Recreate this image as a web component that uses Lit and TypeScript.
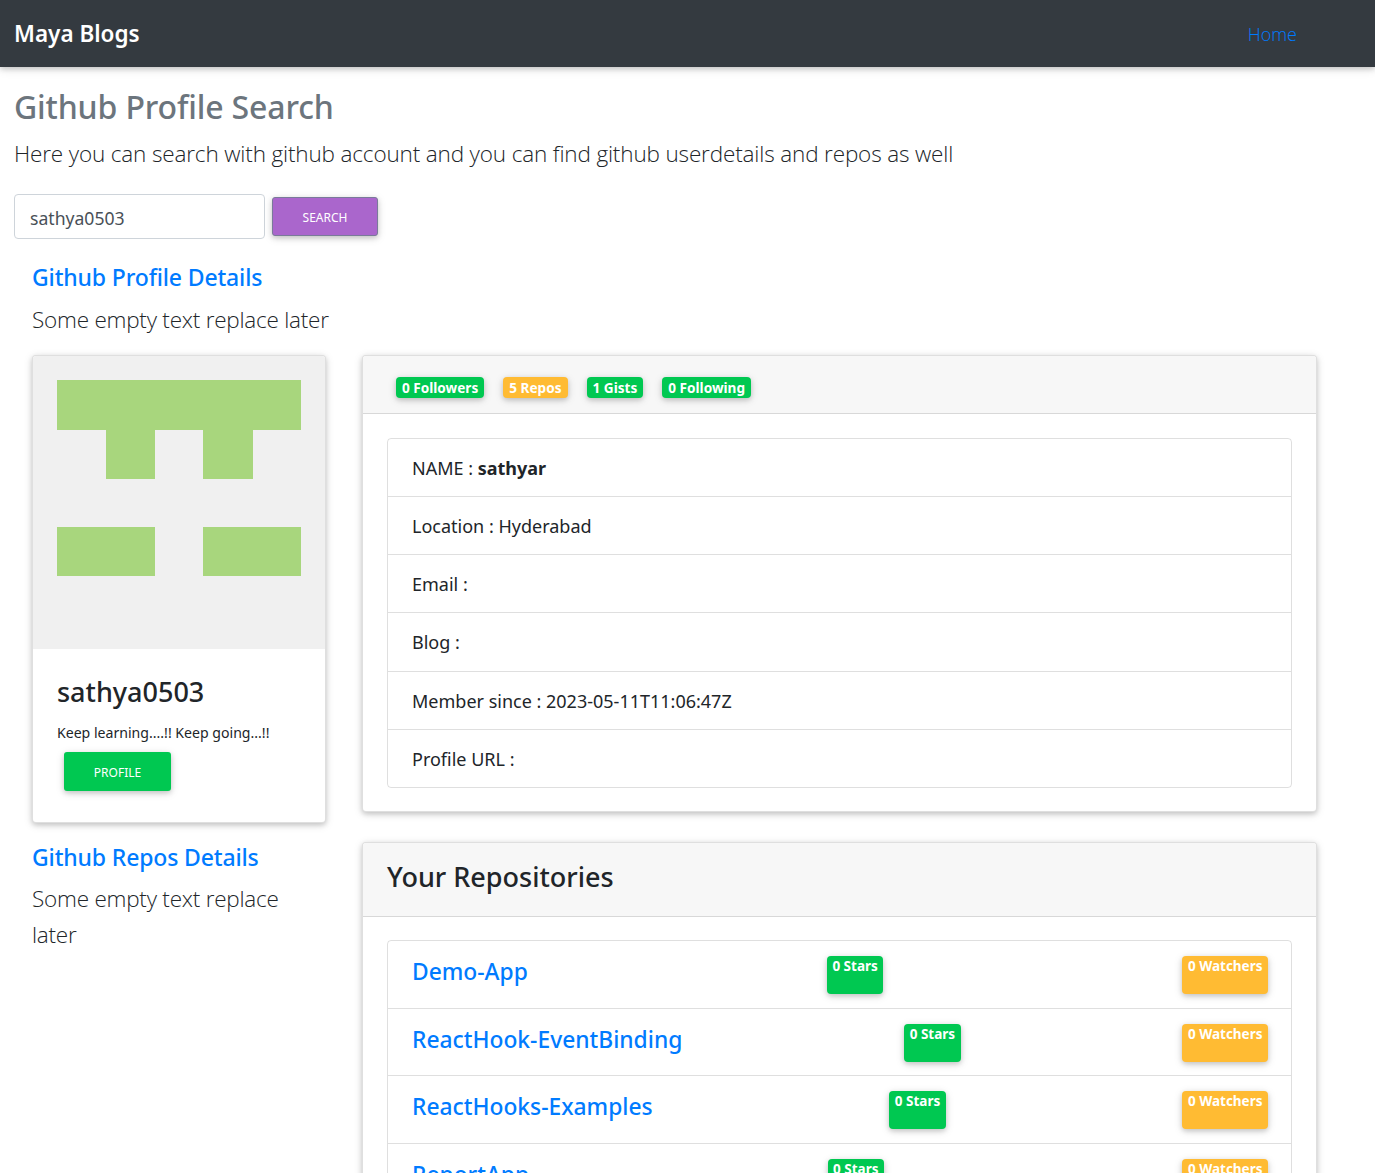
import { html, css, LitElement, svg } from 'lit';
import { customElement } from 'lit/decorators.js';

const repos = [
  { name: 'Demo-App', stars: 0, watchers: 0 },
  { name: 'ReactHook-EventBinding', stars: 0, watchers: 0 },
  { name: 'ReactHooks-Examples', stars: 0, watchers: 0 },
  { name: 'ReportApp', stars: 0, watchers: 0 },
];

const details = ['Location : Hyderabad', 'Email :', 'Blog :', 'Member since : 2023-05-11T11:06:47Z', 'Profile URL :'];

// x, y, w, h inside the 292x293 avatar
const identicon = [
  [24, 24, 244, 50],
  [73, 74, 49, 49],
  [170, 74, 50, 49],
  [24, 171, 98, 49],
  [170, 171, 98, 49],
];

@customElement('app-root')
export class AppRoot extends LitElement {
  render() {
    return html`
      <nav class="navbar">
        <a class="brand">Maya Blogs</a>
        <a class="nav-link">Home</a>
      </nav>
      <main class="page">
        <h2 class="page-title">Github Profile Search</h2>
        <p class="lead intro">Here you can search with github account and you can find github userdetails and repos as well</p>
        <form class="search">
          <input class="search-input" .value=${'sathya0503'} />
          <button type="button" class="btn btn-purple">Search</button>
        </form>
        <div class="content">
          <h4 class="section-title">Github Profile Details</h4>
          <p class="lead section-lead">Some empty text replace later</p>
          <div class="columns">
            <div class="side">
              <div class="card">
                <svg class="avatar" viewBox="0 0 292 293">
                  <rect width="292" height="293" fill="#f0f0f0"></rect>
                  ${identicon.map(
                    ([x, y, w, h]) => svg`<rect x=${x} y=${y} width=${w} height=${h} fill="#a8d67d"></rect>`
                  )}
                </svg>
                <div class="card-body">
                  <h4 class="card-title">sathya0503</h4>
                  <p class="bio">Keep learning....!! Keep going...!!</p>
                  <button type="button" class="btn btn-green">Profile</button>
                </div>
              </div>
              <h4 class="section-title repos-title">Github Repos Details</h4>
              <p class="lead repos-lead">Some empty text replace later</p>
            </div>
            <div class="main-col">
              <div class="card">
                <div class="card-header badges">
                  <span class="badge green">0 Followers</span>
                  <span class="badge orange">5 Repos</span>
                  <span class="badge green">1 Gists</span>
                  <span class="badge green">0 Following</span>
                </div>
                <div class="card-body wide">
                  <ul class="list">
                    <li class="item">NAME : <strong>sathyar</strong></li>
                    ${details.map(d => html`<li class="item">${d}</li>`)}
                  </ul>
                </div>
              </div>
              <div class="card repos-card">
                <div class="card-header repos-header">Your Repositories</div>
                <div class="card-body wide repos-body">
                  <ul class="list">
                    ${repos.map(
                      r => html`
                        <li class="item repo">
                          <a class="repo-name">${r.name}</a>
                          <span class="badge tall green">${r.stars} Stars</span>
                          <span class="badge tall orange">${r.watchers} Watchers</span>
                        </li>
                      `
                    )}
                  </ul>
                </div>
              </div>
            </div>
          </div>
        </div>
      </main>
    `;
  }

  static styles = css`
    :host {
      display: block;
      height: 100vh;
      overflow: hidden;
      font-family: 'Noto Sans', 'Open Sans', sans-serif;
      color: #212529;
      background: #fff;
    }

    * {
      box-sizing: border-box;
    }

    .navbar {
      display: flex;
      align-items: center;
      justify-content: space-between;
      height: 67px;
      padding: 0 78px 0 14px;
      background: #343a40;
      box-shadow: 0 2px 5px rgba(0, 0, 0, 0.16), 0 2px 10px rgba(0, 0, 0, 0.12);
      position: relative;
    }

    .brand {
      color: #fff;
      font-size: 22.5px;
      font-weight: 600;
      padding-bottom: 1px;
    }

    .nav-link {
      color: #007bff;
      font-family: 'Open Sans', sans-serif;
      font-size: 18px;
      font-weight: 300;
    }

    .page {
      padding: 0 14px;
    }

    .page-title {
      margin: 0;
      padding-top: 17px;
      font-size: 32px;
      line-height: 45px;
      letter-spacing: -0.15px;
      font-weight: 500;
      color: #6c757d;
    }

    .lead {
      margin: 0;
      font-family: 'Open Sans', sans-serif;
      font-size: 22.5px;
      font-weight: 300;
      line-height: 36px;
      letter-spacing: -0.23px;
    }

    .intro {
      margin-top: 7px;
      letter-spacing: -0.15px;
    }

    .search {
      display: flex;
      align-items: center;
      gap: 7px;
      margin-top: 22px;
    }

    .search-input {
      width: 251px;
      height: 45px;
      padding: 2px 15px 0;
      border: 1px solid #ced4da;
      border-radius: 4px;
      font: inherit;
      font-size: 17.6px;
      color: #495057;
      outline: none;
    }

    .btn {
      border: 0;
      border-radius: 3px;
      padding: 2px 0 0;
      color: #fff;
      font-family: inherit;
      font-size: 12px;
      text-transform: uppercase;
      box-shadow: 0 2px 5px rgba(0, 0, 0, 0.16), 0 2px 10px rgba(0, 0, 0, 0.12);
    }

    .btn-purple {
      width: 106px;
      height: 39px;
      background: #aa66cc;
      border: 1px solid #7a7a9a;
    }

    .btn-green {
      display: block;
      width: 107px;
      height: 39px;
      margin: 0 0 0 7px;
      background: #00c851;
    }

    .content {
      width: 1285px;
      margin-left: 18px;
      padding-top: 20px;
    }

    .section-title {
      margin: 0;
      font-size: 23px;
      font-weight: 500;
      line-height: 36px;
      letter-spacing: -0.15px;
      color: #007bff;
    }

    .section-lead {
      margin-top: 7px;
    }

    .columns {
      display: grid;
      grid-template-columns: 294px 955px;
      gap: 36px;
      margin-top: 17px;
      align-items: start;
    }

    .card {
      border-radius: 4px;
      background: #fff;
      overflow: hidden;
      box-shadow: 0 2px 5px rgba(0, 0, 0, 0.16), 0 2px 10px rgba(0, 0, 0, 0.12);
      border: 1px solid rgba(0, 0, 0, 0.125);
    }

    .avatar {
      display: block;
      width: 292px;
      height: 293px;
    }

    .card-body {
      padding: 24px;
    }

    .side .card-body {
      padding-bottom: 23px;
    }

    .card-title {
      margin: 0;
      font-size: 27px;
      line-height: 38px;
      font-weight: 500;
    }

    .bio {
      margin: 12px 0 0;
      font-size: 14.1px;
      line-height: 20px;
    }

    .bio + .btn {
      margin-top: 9px;
      margin-bottom: 8px;
    }

    .repos-title {
      margin-top: 16px;
    }

    .repos-lead {
      margin-top: 6px;
    }

    .card-header {
      background: #f7f7f7;
      border-bottom: 1px solid rgba(0, 0, 0, 0.125);
    }

    .badges {
      display: flex;
      align-items: center;
      gap: 19px;
      height: 58px;
      padding: 6px 33px 0;
    }

    .badge {
      display: inline-block;
      padding: 3px 6px;
      border-radius: 4px;
      color: #fff;
      font-size: 13.6px;
      line-height: 15px;
      font-weight: 700;
      white-space: nowrap;
      box-shadow: 0 2px 5px rgba(0, 0, 0, 0.16), 0 2px 10px rgba(0, 0, 0, 0.12);
    }

    .badge.green {
      background: #00c851;
    }

    .badge.orange {
      background: #ffbb33;
    }

    .badge.tall {
      height: 38px;
      padding: 3px 5.5px 0;
      font-size: 13.5px;
    }

    .list {
      list-style: none;
      margin: 0;
      padding: 0;
      border: 1px solid rgba(0, 0, 0, 0.125);
      border-radius: 4px;
    }

    .wide {
      padding-bottom: 23px;
    }

    .item {
      padding: 13px 24px 11px;
      font-size: 18px;
      line-height: 33.14px;
      border-bottom: 1px solid rgba(0, 0, 0, 0.125);
    }

    .item:last-child {
      border-bottom: 0;
    }

    .item strong {
      font-weight: 700;
    }

    .repos-card {
      margin-top: 30px;
    }

    .repos-header {
      height: 74px;
      padding: 0 24px 6px;
      display: flex;
      align-items: center;
      font-size: 27px;
      font-weight: 500;
    }

    .repos-body {
      padding-top: 23px;
    }

    .repo {
      display: flex;
      justify-content: space-between;
      align-items: flex-start;
      height: 67.75px;
      padding: 15px 23px 0 24px;
    }

    .repo-name {
      margin-top: -1px;
      color: #007bff;
      font-size: 22.8px;
      font-weight: 500;
    }
  `;
}
